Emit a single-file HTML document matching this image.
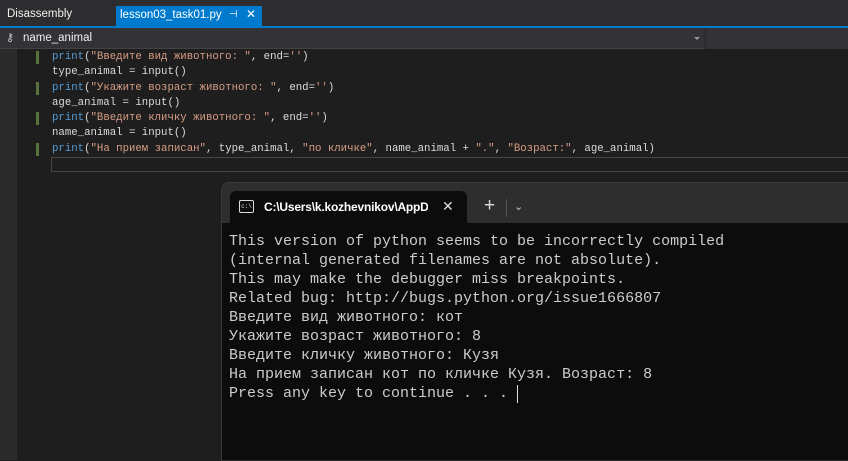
<!DOCTYPE html><html><head><meta charset="utf-8"><style>
body{margin:0;width:848px;height:460px;overflow:hidden;background:#1e1e1e;position:relative;font-family:"Liberation Sans","Noto Sans CJK SC",sans-serif}
.a{position:absolute}
.code{font-family:"Liberation Mono","DejaVu Sans Mono",monospace;font-size:10.7px;white-space:pre;color:#dcdcdc;line-height:15.3px}
.k{color:#569cd6}.s{color:#d69d85}
.term{font-family:"Liberation Mono","DejaVu Sans Mono",monospace;font-size:15px;line-height:19px;color:#cccccc;white-space:pre}
</style></head><body>
<div class="a" style="left:0;top:0;width:848px;height:26px;background:#2d2d30"></div>
<div class="a" style="left:7px;top:8px;font-size:11.5px;color:#f1f1f1">Disassembly</div>
<div class="a" style="left:116px;top:6px;width:146px;height:20px;background:#007acc"></div>
<div class="a" style="left:120px;top:9px;font-size:11.5px;color:#fff">lesson03_task01.py</div>
<div class="a" style="left:229px;top:9px;font-size:10px;color:#fff">⊣</div>
<div class="a" style="left:246px;top:7px;font-size:12px;color:#fff">✕</div>
<div class="a" style="left:0;top:26px;width:848px;height:2px;background:#007acc"></div>
<div class="a" style="left:0;top:28px;width:848px;height:21px;background:#333337"></div>
<div class="a" style="left:0;top:28px;width:704px;height:20px;background:#333337;border-bottom:1px solid #434346"></div>
<div class="a" style="left:704px;top:28px;width:3px;height:21px;background:#2d2d30"></div>
<div class="a" style="left:6px;top:31px;font-size:11px;color:#ccc">⚷</div>
<div class="a" style="left:23px;top:32px;font-size:11.5px;color:#f1f1f1">name_animal</div>
<div class="a" style="left:694px;top:37px;border:3px solid transparent;border-top:3px solid #999"></div>
<div class="a" style="left:0;top:49px;width:17px;height:411px;background:#2b2b2b"></div>
<div class="a" style="left:36px;top:51px;width:3px;height:13px;background:#57723a"></div>
<div class="a" style="left:36px;top:82px;width:3px;height:13px;background:#57723a"></div>
<div class="a" style="left:36px;top:112px;width:3px;height:13px;background:#57723a"></div>
<div class="a" style="left:36px;top:143px;width:3px;height:13px;background:#57723a"></div>
<div class="a code" style="left:52px;top:50px"><span class="k">print</span>(<span class="s">"Введите вид животного: "</span>, end=<span class="s">''</span>)
type_animal = input()
<span class="k">print</span>(<span class="s">"Укажите возраст животного: "</span>, end=<span class="s">''</span>)
age_animal = input()
<span class="k">print</span>(<span class="s">"Введите кличку животного: "</span>, end=<span class="s">''</span>)
name_animal = input()
<span class="k">print</span>(<span class="s">"На прием записан"</span>, type_animal, <span class="s">"по кличке"</span>, name_animal + <span class="s">"."</span>, <span class="s">"Возраст:"</span>, age_animal)</div>
<div class="a" style="left:51px;top:157px;width:800px;height:13px;border:1px solid #464646"></div>
<div class="a" style="left:221px;top:182px;width:627px;height:278px;background:#2e2e2e;border-radius:8px 0 0 0;border:1px solid #3a3a3a;border-right:0;border-bottom:0"></div>
<div class="a" style="left:230px;top:191px;width:237px;height:32px;background:#0c0c0c;border-radius:6px 6px 0 0"></div>
<div class="a" style="left:239px;top:200px;width:13px;height:11px;border:1px solid #ddd;border-radius:2px;font-size:6px;color:#ddd;line-height:12px;text-align:center;font-family:'Liberation Mono',monospace">c:\</div>
<div class="a" style="left:264px;top:200px;font-size:12px;color:#fff;font-weight:bold;width:164px;overflow:hidden;white-space:nowrap;letter-spacing:-0.2px">C:\Users\k.kozhevnikov\AppD</div>
<div class="a" style="left:442px;top:198px;font-size:14px;color:#ddd">✕</div>
<div class="a" style="left:484px;top:195px;font-size:19px;color:#ddd">+</div>
<div class="a" style="left:506px;top:199px;width:1px;height:18px;background:#555"></div>
<div class="a" style="left:514px;top:200px;font-size:11px;color:#ccc">⌄</div>
<div class="a" style="left:222px;top:223px;width:626px;height:237px;background:#0c0c0c"></div>
<div class="a term" style="left:229px;top:232px">This version of python seems to be incorrectly compiled
(internal generated filenames are not absolute).
This may make the debugger miss breakpoints.
Related bug: http://bugs.python.org/issue1666807
Введите вид животного: кот
Укажите возраст животного: 8
Введите кличку животного: Кузя
На прием записан кот по кличке Кузя. Возраст: 8
Press any key to continue . . . </div>
<div class="a" style="left:517px;top:385px;width:1px;height:18px;background:#ddd"></div>
</body></html>
